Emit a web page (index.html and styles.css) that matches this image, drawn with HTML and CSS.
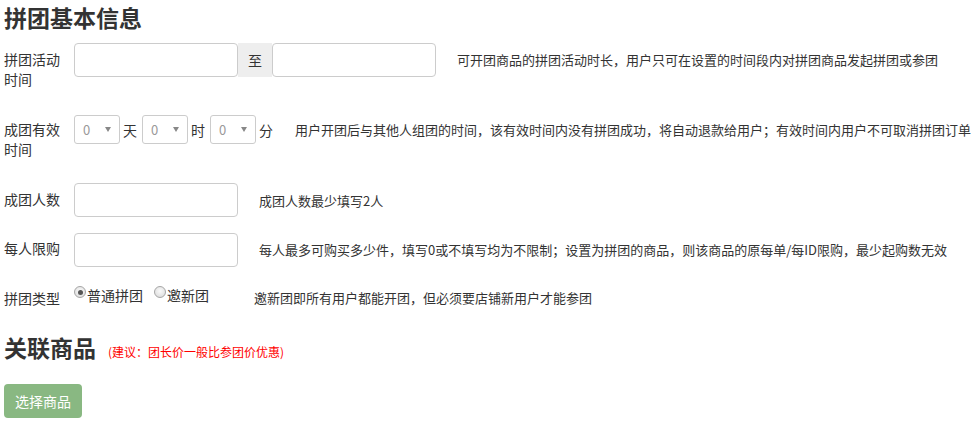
FILE: index.html
```html
<!DOCTYPE html>
<html lang="zh">
<head>
<meta charset="utf-8">
<title>拼团基本信息</title>
<link rel="stylesheet" href="styles.css">
</head>
<body>
<div class="page">
  <h3 class="section-title">拼团基本信息</h3>

  <div class="row row-time">
    <div class="label">拼团活动时间</div>
    <div class="input-group">
      <div class="input"></div>
      <div class="addon">至</div>
      <div class="input"></div>
    </div>
    <div class="help help-time">可开团商品的拼团活动时长，用户只可在设置的时间段内对拼团商品发起拼团或参团</div>
  </div>

  <div class="row row-valid">
    <div class="label label-sel">成团有效时间</div>
    <div class="selects">
      <div class="select"><span class="val">0</span><span class="caret"></span></div>
      <span class="unit">天</span>
      <div class="select"><span class="val">0</span><span class="caret"></span></div>
      <span class="unit">时</span>
      <div class="select"><span class="val">0</span><span class="caret"></span></div>
      <span class="unit unit-last">分</span>
    </div>
    <div class="help help-valid">用户开团后与其他人组团的时间，该有效时间内没有拼团成功，将自动退款给用户；有效时间内用户不可取消拼团订单</div>
  </div>

  <div class="row row-num">
    <div class="label">成团人数</div>
    <div class="input"></div>
    <div class="help help-num">成团人数最少填写2人</div>
  </div>

  <div class="row row-limit">
    <div class="label label-limit">每人限购</div>
    <div class="input"></div>
    <div class="help help-limit">每人最多可购买多少件，填写0或不填写均为不限制；设置为拼团的商品，则该商品的原每单/每ID限购，最少起购数无效</div>
  </div>

  <div class="row row-type">
    <div class="label label-type">拼团类型</div>
    <div class="radios">
      <label class="radio"><span class="dot checked"></span>普通拼团</label>
      <label class="radio"><span class="dot"></span>邀新团</label>
    </div>
    <div class="help help-type">邀新团即所有用户都能开团，但必须要店铺新用户才能参团</div>
  </div>

  <div class="title-row">
    <h3 class="section-title second">关联商品</h3>
    <span class="note">(建议：团长价一般比参团价优惠)</span>
  </div>

  <button class="btn-select" type="button">选择商品</button>
</div>
</body>
</html>
```

FILE: styles.css
```css
html, body {
  margin: 0;
  padding: 0;
  background: #fff;
}

body {
  font-family: "Noto Sans CJK SC", "Noto Sans", "Liberation Sans", sans-serif;
  color: #333;
  font-size: 14px;
}

.page {
  padding: 0 4px;
  width: 967px;
}

.section-title {
  margin: 2px 0 0;
  font-size: 23px;
  line-height: 30px;
  font-weight: 700;
  color: #333;
}

.row {
  display: flex;
  align-items: flex-start;
}

.label {
  width: 56px;
  margin-right: 14px;
  font-size: 14px;
  line-height: 20px;
  padding-top: 6px;
  color: #333;
  flex: none;
}

.label-sel { padding-top: 4px; }
.label-limit { padding-top: 5px; }
.label-type { padding-top: 3px; }

.row-time { margin-top: 11px; }
.row-valid { margin-top: 26px; }
.row-num { margin-top: 24px; }
.row-limit { margin-top: 15px; }
.row-type { margin-top: 18px; }

.input {
  box-sizing: border-box;
  width: 164px;
  height: 34px;
  border: 1px solid #ccc;
  border-radius: 4px;
  background: #fff;
  flex: none;
}

.input-group {
  display: flex;
  flex: none;
}

.addon {
  width: 34px;
  height: 34px;
  background: #eee;
  font-size: 14px;
  line-height: 34px;
  text-align: center;
  color: #333;
}

.help {
  font-size: 13px;
  color: #333;
  white-space: nowrap;
}

.help-time { margin-left: 21px; line-height: 34px; }
.help-valid { margin-left: 22px; line-height: 29px; }
.help-num { margin-left: 21px; line-height: 34px; padding-top: 1px; }
.help-limit { margin-left: 21px; line-height: 34px; }
.help-type { margin-left: 46px; line-height: 20px; padding-top: 3px; }

.selects {
  display: flex;
  align-items: center;
  flex: none;
}

.select {
  box-sizing: border-box;
  width: 46px;
  height: 29px;
  border: 1px solid #ccc;
  border-radius: 3px;
  display: flex;
  align-items: center;
  justify-content: space-between;
  padding: 0 8px 0 8px;
  background: #fff;
  flex: none;
}

.val {
  font-size: 13px;
  color: #999;
}

.caret {
  width: 0;
  height: 0;
  border-left: 3px solid transparent;
  border-right: 3px solid transparent;
  border-top: 5px solid #888;
}

.unit {
  font-size: 14px;
  margin: 0 5px 0 3px;
  line-height: 20px;
  white-space: nowrap;
}

.unit-last { margin-right: 0; }

.radios {
  display: flex;
  width: 134px;
  flex: none;
}

.radio {
  display: flex;
  align-items: flex-start;
  font-size: 14px;
  line-height: 20px;
  margin-right: 11px;
  color: #333;
  white-space: nowrap;
  flex: none;
}

.radio:last-child { margin-right: 0; }

.dot {
  box-sizing: border-box;
  width: 12px;
  height: 12px;
  margin-top: 1px;
  margin-right: 1px;
  border-radius: 50%;
  border: 1px solid #a6a6a6;
  background: radial-gradient(circle at 50% 40%, #fafafa 0%, #e2e2e2 70%, #d0d0d0 100%);
  position: relative;
  flex: none;
}

.dot.checked::after {
  content: "";
  position: absolute;
  left: 2.5px;
  top: 2.5px;
  width: 5px;
  height: 5px;
  border-radius: 50%;
  background: #555;
}

.title-row {
  display: flex;
  align-items: baseline;
  margin-top: 24px;
}

.section-title.second {
  margin: 0;
}

.note {
  font-size: 12px;
  color: #f00;
  margin-left: 12px;
}

.btn-select {
  display: block;
  margin-top: 22px;
  width: 78px;
  height: 34px;
  border: none;
  border-radius: 4px;
  background: #89b882;
  color: #fff;
  font-family: "Noto Sans CJK SC", "Noto Sans", sans-serif;
  font-size: 14px;
  padding: 0;
}
```
